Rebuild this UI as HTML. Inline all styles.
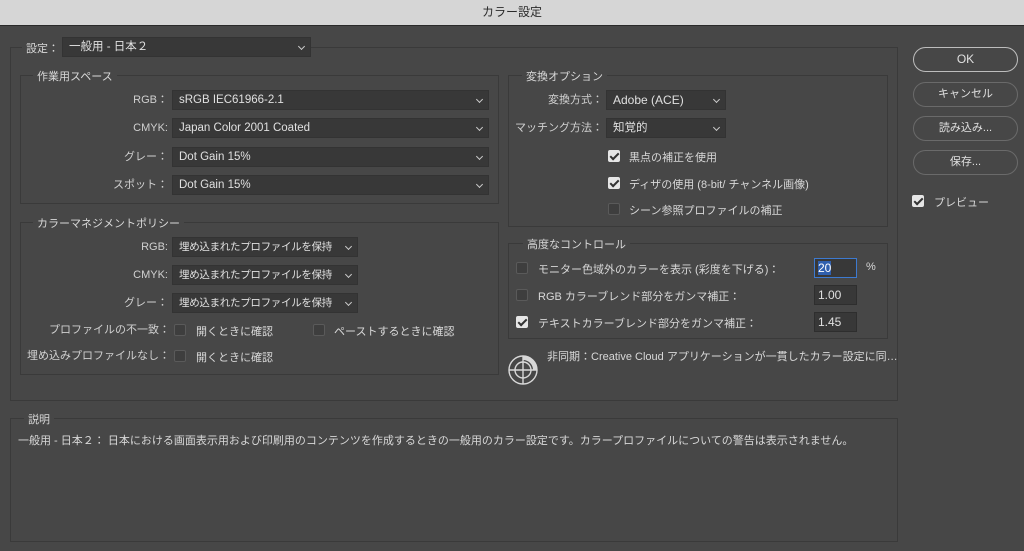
<!DOCTYPE html>
<html><head><meta charset="utf-8"><style>
*{margin:0;padding:0;box-sizing:border-box}
body{width:1024px;height:551px;background:#474747;font-family:"Liberation Sans","Noto Sans CJK JP",sans-serif;font-size:11px;color:#d8d8d8;position:relative;overflow:hidden}
.a{position:absolute;white-space:nowrap}
.tb{left:0;top:0;width:1024px;height:26px;background:#d6d6d6;border-bottom:1px solid #2a2a2a;text-align:center;line-height:25px;color:#2a2a2a;font-size:12px}
.box{position:absolute;border:1px solid #3a3a3a}
.lg{position:absolute;background:#474747;padding:0 4px;font-size:11px;color:#d8d8d8}
.sel{position:absolute;background:#383838;border:1px solid #333;height:20px;line-height:19px;padding-left:6px;color:#e0e0e0;font-size:11.5px;overflow:hidden}
.sel:after{content:"";position:absolute;right:6px;top:6px;width:4px;height:4px;border-right:1px solid #ccc;border-bottom:1px solid #ccc;transform:rotate(45deg)}
.sp{font-size:10.5px;letter-spacing:-0.3px}
.lb{position:absolute;text-align:right;line-height:20px;color:#d0d0d0}
.cb{position:absolute;width:12px;height:12px;border:1px solid #5a5a5a;border-radius:2px;background:#3e3e3e}
.cb.on{background:#e6e6e6;border-color:#e6e6e6}
.cb.on:after{content:"";position:absolute;left:3px;top:0px;width:3px;height:7px;border-right:2px solid #333;border-bottom:2px solid #333;transform:rotate(45deg)}
.inp{position:absolute;background:#383838;border:1px solid #2e2e2e;height:20px;line-height:18px;padding-left:3px;color:#e0e0e0;font-size:12px;width:43px}
.btn{position:absolute;left:913px;width:105px;height:25px;border:1px solid #6a6a6a;border-radius:13px;text-align:center;line-height:23px;color:#e0e0e0}
</style></head><body>
<div class="a tb">カラー設定</div>

<div class="box" style="left:10px;top:47px;width:888px;height:354px"></div>
<div class="lg" style="left:22px;top:40px;">設定：</div>
<div class="sel" style="left:62px;top:37px;width:249px">一般用 - 日本２</div>

<div class="box" style="left:20px;top:75px;width:479px;height:129px"></div>
<div class="lg" style="left:33px;top:68px">作業用スペース</div>
<div class="lb" style="left:60px;top:90px;width:108px">RGB：</div>
<div class="sel" style="left:172px;top:90px;width:317px">sRGB IEC61966-2.1</div>
<div class="lb" style="left:60px;top:118px;width:108px">CMYK:</div>
<div class="sel" style="left:172px;top:118px;width:317px">Japan Color 2001 Coated</div>
<div class="lb" style="left:60px;top:147px;width:108px">グレー：</div>
<div class="sel" style="left:172px;top:147px;width:317px">Dot Gain 15%</div>
<div class="lb" style="left:60px;top:175px;width:108px">スポット：</div>
<div class="sel" style="left:172px;top:175px;width:317px">Dot Gain 15%</div>

<div class="box" style="left:20px;top:222px;width:479px;height:153px"></div>
<div class="lg" style="left:33px;top:215px">カラーマネジメントポリシー</div>
<div class="lb" style="left:60px;top:237px;width:108px">RGB:</div>
<div class="sel sp" style="left:172px;top:237px;width:186px">埋め込まれたプロファイルを保持</div>
<div class="lb" style="left:60px;top:265px;width:108px">CMYK:</div>
<div class="sel sp" style="left:172px;top:265px;width:186px">埋め込まれたプロファイルを保持</div>
<div class="lb" style="left:60px;top:293px;width:108px">グレー：</div>
<div class="sel sp" style="left:172px;top:293px;width:186px">埋め込まれたプロファイルを保持</div>
<div class="lb" style="left:20px;top:320px;width:150px">プロファイルの不一致：</div>
<div class="cb" style="left:174px;top:324px"></div><div class="a" style="left:196px;top:323px">開くときに確認</div>
<div class="cb" style="left:313px;top:324px"></div><div class="a" style="left:334px;top:323px">ペーストするときに確認</div>
<div class="lb" style="left:20px;top:346px;width:150px">埋め込みプロファイルなし：</div>
<div class="cb" style="left:174px;top:350px"></div><div class="a" style="left:196px;top:349px">開くときに確認</div>

<div class="box" style="left:508px;top:75px;width:380px;height:152px"></div>
<div class="lg" style="left:522px;top:68px">変換オプション</div>
<div class="lb" style="left:510px;top:90px;width:93px">変換方式：</div>
<div class="sel" style="left:606px;top:90px;width:120px;font-size:12px">Adobe (ACE)</div>
<div class="lb" style="left:510px;top:118px;width:93px">マッチング方法：</div>
<div class="sel" style="left:606px;top:118px;width:120px">知覚的</div>
<div class="cb on" style="left:608px;top:150px"></div><div class="a" style="left:629px;top:149px">黒点の補正を使用</div>
<div class="cb on" style="left:608px;top:177px"></div><div class="a" style="left:629px;top:176px">ディザの使用 (8-bit/ チャンネル画像)</div>
<div class="cb" style="left:608px;top:203px"></div><div class="a" style="left:629px;top:202px">シーン参照プロファイルの補正</div>

<div class="box" style="left:508px;top:243px;width:380px;height:96px"></div>
<div class="lg" style="left:523px;top:236px">高度なコントロール</div>
<div class="cb" style="left:516px;top:262px"></div><div class="a" style="left:538px;top:261px">モニター色域外のカラーを表示 (彩度を下げる)：</div>
<div class="inp" style="left:814px;top:258px;border:1px solid #3d7ad0"><span style="background:#2f5fae;color:#fff">20</span></div><div class="a" style="left:866px;top:261px">%</div>
<div class="cb" style="left:516px;top:289px"></div><div class="a" style="left:538px;top:288px">RGB カラーブレンド部分をガンマ補正：</div>
<div class="inp" style="left:814px;top:285px">1.00</div>
<div class="cb on" style="left:516px;top:316px"></div><div class="a" style="left:538px;top:315px">テキストカラーブレンド部分をガンマ補正：</div>
<div class="inp" style="left:814px;top:312px">1.45</div>

<svg class="a" style="left:507px;top:354px" width="32" height="32" viewBox="0 0 32 32" fill="none" stroke="#d8d8d8" stroke-width="1.4"><circle cx="16" cy="16" r="14"/><circle cx="16" cy="16" r="8"/><path d="M2 16H30M16 2V30"/><path d="M16 4A12 12 0 0 1 28 16" stroke-width="4"/></svg>
<div class="a" style="left:547px;top:348px">非同期：Creative Cloud アプリケーションが一貫したカラー設定に同…</div>

<div class="box" style="left:10px;top:418px;width:888px;height:124px"></div>
<div class="lg" style="left:24px;top:411px">説明</div>
<div class="a" style="left:18px;top:432px">一般用 - 日本２： 日本における画面表示用および印刷用のコンテンツを作成するときの一般用のカラー設定です。カラープロファイルについての警告は表示されません。</div>

<div class="btn" style="top:47px;border-color:#bdbdbd;font-size:12px">OK</div>
<div class="btn" style="top:82px">キャンセル</div>
<div class="btn" style="top:116px">読み込み...</div>
<div class="btn" style="top:150px">保存...</div>
<div class="cb on" style="left:912px;top:195px"></div><div class="a" style="left:934px;top:194px">プレビュー</div>
</body></html>
